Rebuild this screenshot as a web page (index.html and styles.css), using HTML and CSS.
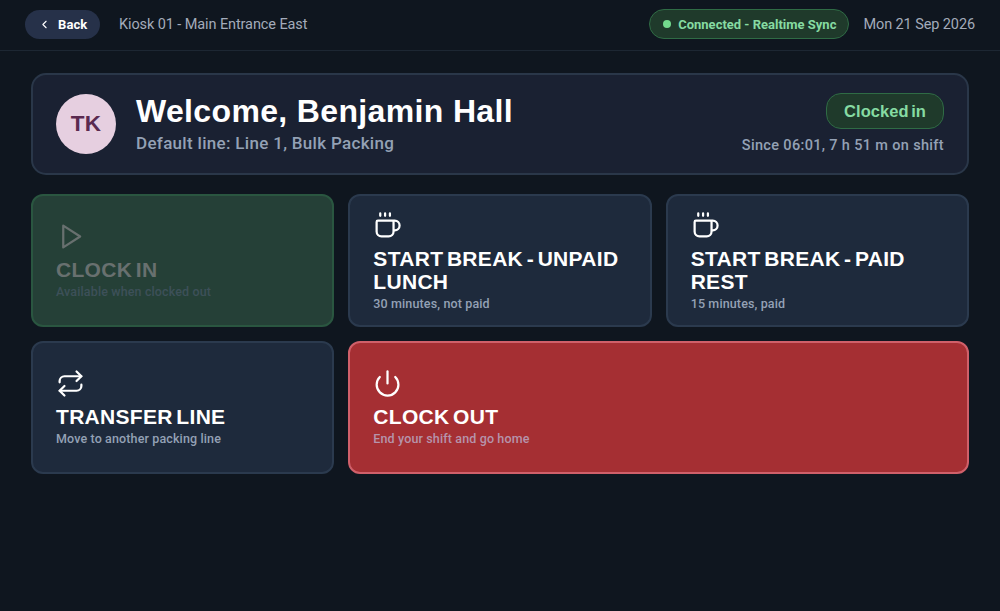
FILE: index.html
```html
<!DOCTYPE html>
<html lang="en">
<head>
    <meta charset="UTF-8">
    <meta name="viewport" content="width=device-width, initial-scale=1.0">
    <title>Kiosk 01 - Main Entrance East</title>
    <link rel="stylesheet" href="styles.css">
</head>
<body>

    <header>
        <button type="button" class="back-btn">
            <svg viewBox="0 0 24 24"><path d="m15 18-6-6 6-6"/></svg>
            <span>Back</span>
        </button>
        <span class="kiosk-name">Kiosk 01 - Main Entrance East</span>
        <div class="sync-status"><span class="dot"></span><span>Connected - Realtime Sync</span></div>
        <span class="date">Mon 21 Sep 2026</span>
    </header>

    <main>
        <section class="welcome">
            <div class="avatar">TK</div>
            <div class="employee">
                <h1>Welcome, Benjamin Hall</h1>
                <p>Default line: Line 1, Bulk Packing</p>
            </div>
            <div class="shift">
                <span class="badge">Clocked in</span>
                <p>Since 06:01, 7 h 51 m on shift</p>
            </div>
        </section>

        <div class="actions">
            <button type="button" class="tile clock-in" disabled>
                <svg viewBox="0 0 24 24"><path d="m6 3 14 9-14 9z"/></svg>
                <span class="title">CLOCK IN</span>
                <span class="hint">Available when clocked out</span>
            </button>

            <button type="button" class="tile">
                <svg viewBox="0 0 24 24"><path d="M6 2v2M10 2v2M14 2v2"/><path d="M16 8a1 1 0 0 1 1 1v8a4 4 0 0 1-4 4H7a4 4 0 0 1-4-4V9a1 1 0 0 1 1-1h14a4 4 0 1 1 0 8h-1"/></svg>
                <span class="title">START BREAK - UNPAID LUNCH</span>
                <span class="hint">30 minutes, not paid</span>
            </button>

            <button type="button" class="tile">
                <svg viewBox="0 0 24 24"><path d="M6 2v2M10 2v2M14 2v2"/><path d="M16 8a1 1 0 0 1 1 1v8a4 4 0 0 1-4 4H7a4 4 0 0 1-4-4V9a1 1 0 0 1 1-1h14a4 4 0 1 1 0 8h-1"/></svg>
                <span class="title">START BREAK - PAID REST</span>
                <span class="hint">15 minutes, paid</span>
            </button>

            <button type="button" class="tile">
                <svg viewBox="0 0 24 24"><path d="m17 2 4 4-4 4"/><path d="M3 11v-1a4 4 0 0 1 4-4h14"/><path d="m7 22-4-4 4-4"/><path d="M21 13v1a4 4 0 0 1-4 4H3"/></svg>
                <span class="title">TRANSFER LINE</span>
                <span class="hint">Move to another packing line</span>
            </button>

            <button type="button" class="tile clock-out">
                <svg viewBox="0 0 24 24"><path d="M12 2v10"/><path d="M18.4 6.6a9 9 0 1 1-12.77.04"/></svg>
                <span class="title">CLOCK OUT</span>
                <span class="hint">End your shift and go home</span>
            </button>
        </div>
    </main>

</body>
</html>
```
FILE: styles.css
```css
* {
  box-sizing: border-box;
}

body {
  margin: 0;
  min-height: 100vh;
  background: #0f161f;
  color: #fff;
  font-family: Roboto, "Liberation Sans", sans-serif;
}

h1, p {
  margin: 0;
}

button {
  font-family: inherit;
  color: inherit;
  cursor: pointer;
}

svg {
  fill: none;
  stroke: currentColor;
  stroke-width: 1.85;
  stroke-linecap: round;
  stroke-linejoin: round;
}

header {
  display: flex;
  align-items: center;
  height: 51px;
  padding: 0 25px 2px;
  border-bottom: 1px solid #1d2733;
  font-size: 14.5px;
  letter-spacing: -0.1px;
  color: #a3abba;
  white-space: nowrap;
}

.back-btn {
  display: flex;
  align-items: center;
  gap: 7px;
  width: 75px;
  height: 29px;
  padding: 0 0 0 13px;
  border: none;
  border-radius: 15px;
  background: #263149;
  color: #fff;
  font-size: 13px;
  font-weight: 700;
  letter-spacing: 0.1px;
}

.back-btn svg {
  width: 13px;
  height: 13px;
  stroke-width: 2;
}

.kiosk-name {
  margin-left: 19px;
  padding-top: 1px;
}

.sync-status {
  display: flex;
  align-items: center;
  gap: 7px;
  height: 30px;
  margin-left: auto;
  padding: 0 12px 0 13px;
  border: 1px solid #2f6b45;
  border-radius: 15px;
  background: #1f3a2b;
  color: #86dba2;
  font-size: 13px;
  font-weight: 700;
  letter-spacing: 0;
}

.sync-status .dot {
  width: 8px;
  height: 8px;
  border-radius: 50%;
  background: #73da8d;
}

.date {
  margin-left: 14px;
  padding-top: 1px;
}

main {
  padding: 22px 31px 0;
}

.welcome {
  display: flex;
  align-items: center;
  height: 102px;
  padding: 0 23px;
  border: 2px solid #2a3749;
  border-radius: 15px;
  background: #1a2132;
}

.avatar {
  display: flex;
  align-items: center;
  justify-content: center;
  width: 60px;
  height: 60px;
  border-radius: 50%;
  background: #e6cfe0;
  color: #5a2a50;
  font-family: "Liberation Sans", Arial, sans-serif;
  font-size: 22.5px;
  font-weight: 700;
  letter-spacing: 0.3px;
}

.employee {
  margin-left: 20px;
  padding-bottom: 2px;
}

.employee h1 {
  font-family: "Liberation Sans", Arial, sans-serif;
  font-size: 32px;
  line-height: 36px;
  letter-spacing: 0.35px;
}

.employee p {
  margin-top: 3px;
  color: #94a1b5;
  font-size: 17px;
  font-weight: 500;
  line-height: 22px;
  letter-spacing: 0.31px;
}

.shift {
  display: flex;
  flex-direction: column;
  align-items: flex-end;
  margin-left: auto;
}

.badge {
  height: 36px;
  padding: 0 17px;
  border: 1px solid #2f6b45;
  border-radius: 15px;
  background: #1f3a2b;
  color: #86dba2;
  font-family: "Liberation Sans", Arial, sans-serif;
  font-size: 16.5px;
  font-weight: 700;
  line-height: 34px;
  letter-spacing: 0.05px;
  word-spacing: -2px;
}

.shift p {
  margin-top: 7px;
  color: #94a1b5;
  font-size: 14.5px;
  font-weight: 500;
  line-height: 20px;
  letter-spacing: 0.34px;
}

.actions {
  display: grid;
  grid-template-columns: repeat(3, 1fr);
  grid-auto-rows: 133px;
  gap: 14px;
  margin-top: 19px;
}

.tile {
  display: flex;
  flex-direction: column;
  align-items: flex-start;
  justify-content: center;
  padding: 0 23px;
  border: 2px solid #2b3a4e;
  border-radius: 12px;
  background: #1e2a3c;
  text-align: left;
}

.tile svg {
  width: 29px;
  height: 29px;
  margin-top: 1px;
}

.tile .title {
  margin-top: 7px;
  font-family: "Liberation Sans", Arial, sans-serif;
  font-size: 21px;
  font-weight: 700;
  line-height: 23px;
  letter-spacing: 0.3px;
  word-spacing: -2.5px;
}

.tile .hint {
  margin-top: 2px;
  color: #94a1b5;
  font-size: 12.5px;
  font-weight: 500;
  line-height: 17px;
  letter-spacing: 0.13px;
}

.clock-in {
  border-color: #2a5640;
  background: #254037;
  color: #68706f;
  cursor: default;
}

.clock-in .hint {
  color: #3d5059;
}

.clock-out {
  grid-column: span 2;
  border-color: #d0606a;
  background: #a52f33;
}

.clock-out .hint {
  color: #b694ab;
}
```
